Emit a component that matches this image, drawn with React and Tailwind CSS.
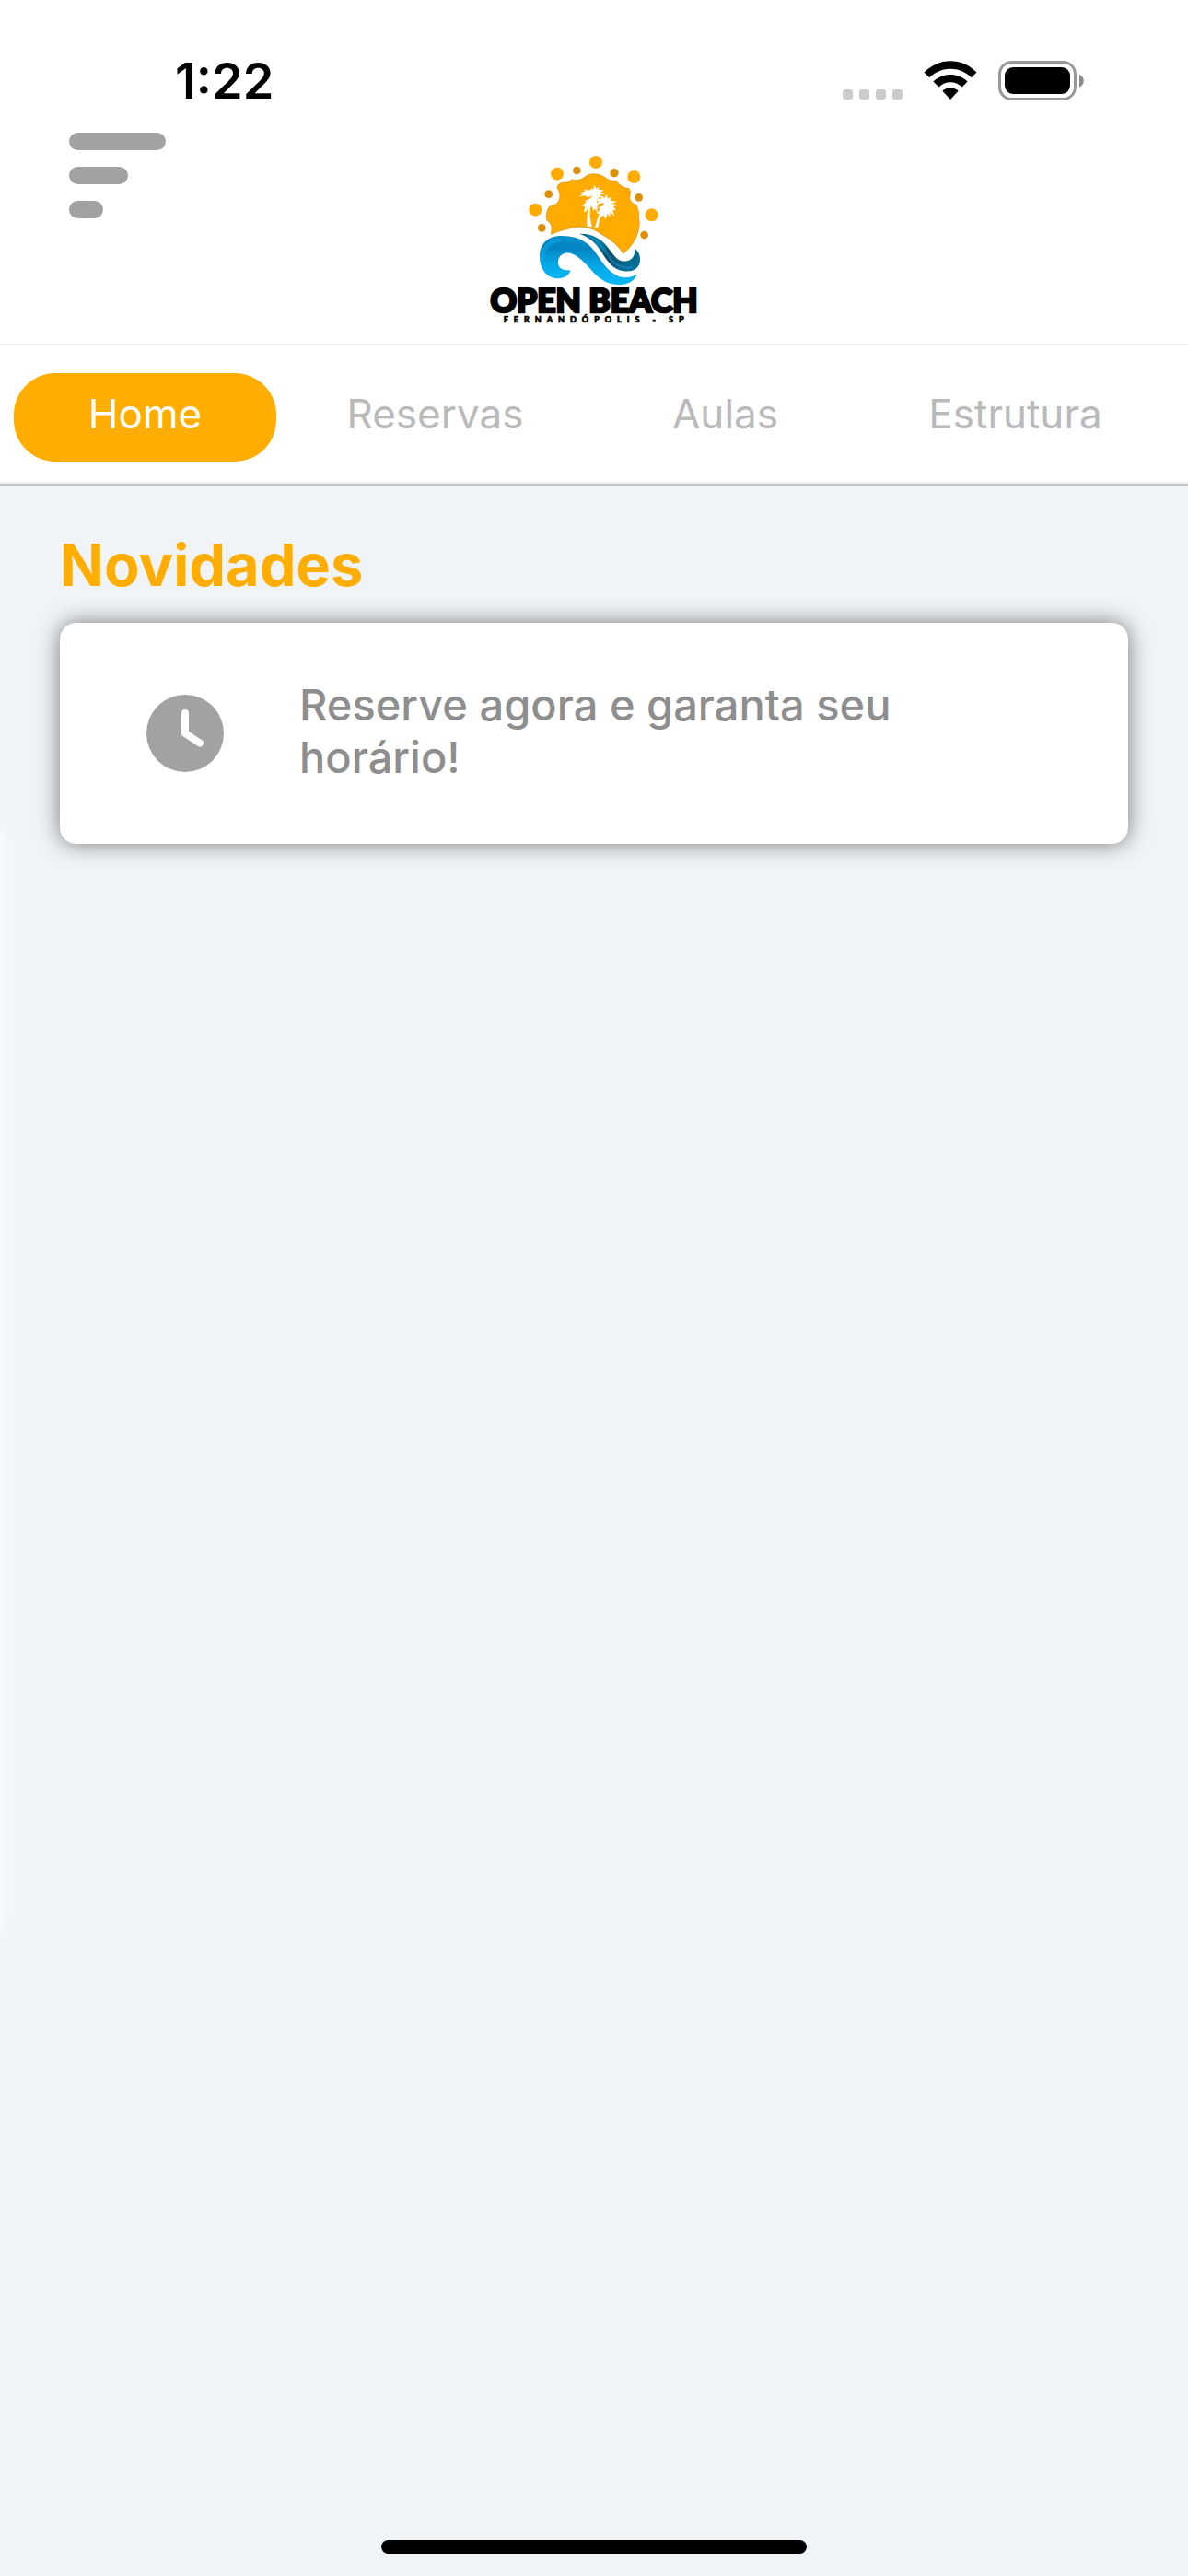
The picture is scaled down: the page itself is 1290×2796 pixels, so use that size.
import React from "react";

const tabs = ["Home", "Reservas", "Aulas", "Estrutura"];

function StatusBar() {
  return (
    <div className="flex items-center justify-between pl-[190px] pr-[113px] pt-[56px]">
      <time className="text-[54px] font-semibold leading-[64px] text-black">1:22</time>
      <div className="flex items-end gap-[23px] pb-[2px]">
        <div className="flex gap-[7px] pb-px" aria-label="Sem sinal">
          {[0, 1, 2, 3].map((i) => (
            <span key={i} className="size-[11px] rounded-[3px] bg-[#cbcbcb]" />
          ))}
        </div>
        <svg className="h-[43px] w-[58px]" viewBox="0 0 58 43" aria-label="Wi-Fi">
          <path d="M0.5 12.6 C16 -3.8 42 -3.8 57.5 12.6 L51.8 18.2 C39 5.6 19 5.6 6.2 18.2 Z" />
          <path d="M10.4 22.4 C20.6 12.4 37.4 12.4 47.6 22.4 L41.6 28.4 C34.5 21.4 23.5 21.4 16.4 28.4 Z" />
          <path d="M20.4 32.8 C25 28 33 28 37.6 32.8 L29 42 Z" />
        </svg>
        <svg className="h-[43px] w-[93px]" viewBox="0 0 93 43" aria-label="Bateria">
          <rect x="1.5" y="1.5" width="82" height="40" rx="13" fill="none" stroke="#999" strokeWidth="3" />
          <rect x="7" y="7" width="71" height="29" rx="9" />
          <path d="M88 15 C94.300 17 94.300 26.500 88 28.500 Z" fill="#8a8a8a" />
        </svg>
      </div>
    </div>
  );
}

function Logo() {
  return (
    <svg className="h-[200px] w-[250px]" viewBox="0 0 750 600" role="img" aria-label="Open Beach Fernandópolis - SP">
      <defs>
        <linearGradient id="wave" x1="0.3" y1="0" x2="0.2" y2="1">
          <stop offset="0" stopColor="#058fd0" />
          <stop offset="0.25" stopColor="#0584c2" />
          <stop offset="0.6" stopColor="#06a8e8" />
          <stop offset="1" stopColor="#08bdfa" />
        </linearGradient>
        <linearGradient id="crest" x1="0" y1="0" x2="1" y2="0.5">
          <stop offset="0" stopColor="#045d84" />
          <stop offset="0.35" stopColor="#0581ae" />
          <stop offset="0.6" stopColor="#034d6c" />
          <stop offset="1" stopColor="#056d96" />
        </linearGradient>
      </defs>
      <path
        d="M235 283 L237 268 Q239 247 221 237 Q217 220 224 202 Q230 188 244 188 Q265 180 264 156 Q262 140 255 133 Q254 121 270 115 Q293 116 303 104 Q325 112 344 97 Q353 87 374 86 Q396 87 410 97 Q424 111 447 109 Q461 130 489 134 Q496 141 491 161 Q491 180 513 187 L521 212 Q519 228 523 245 Q522 264 519 274 Q508 314 471 346 C450 316 430 301 405 286 C375 264 342 252 303 262 C275 269 255 274 235 283 Z"
        fill="#ffab00"
        stroke="#d48b08"
        strokeWidth="2"
      />
      <g fill="#ffab00">
        <circle cx="381" cy="48" r="21" />
        <circle cx="255" cy="86" r="21" />
        <circle cx="505" cy="96" r="21" />
        <circle cx="184" cy="203" r="21" />
        <circle cx="563" cy="220" r="21" />
      </g>
      <g fill="#db9008">
        <circle cx="319" cy="75" r="13" />
        <circle cx="441" cy="83" r="14" />
        <circle cx="227" cy="152" r="13" />
        <circle cx="521" cy="163" r="13" />
        <circle cx="205" cy="262" r="13" />
        <circle cx="539" cy="285" r="13" />
      </g>
      <g fill="#fff">
        <path d="M371 157 L356 162 L344 157 L327 159 L339 151 L330 148 L347 143 L340 136 L361 140 L367 133 L372 139 L376 122 L383 135 L390 129 L391 139 L407 137 L397 146 L410 152 L394 154 L404 165 L390 161 L397 178 L384 169 L385 185 L386 213 L378 199 L374 207 L366 188 L362 204 L355 197 L351 207 L341 211 L346 193 L337 192 L350 176 L344 174 L360 168 Z" />
        <path d="M407 180 L391 183 L381 201 L382 187 L390 176 L383 171 L397 168 L402 158 L409 165 L416 152 L420 166 L433 162 L428 173 L450 176 L434 182 L451 190 L437 191 L447 205 L436 204 L441 223 L427 210 L428 227 L418 216 L414 234 L406 221 L399 226 L389 235 L393 216 L384 215 L395 201 L389 196 L404 190 Z" />
        <path d="M369 174 C359 204 360 229 369 258 L353 258 C350 225 354 198 365 173 Z" />
        <path d="M409 194 C401 214 393 230 388 262 L379 262 C383 235 393 216 405 193 Z" />
      </g>
      <path
        d="M298 400 C295 419 274 430 247 426 C214 420 197 388 198 352 C199 312 228 287 270 288 C326 287 362 312 386 351 C410 386 433 420 475 424 C491 424 505 418 515 413 C506 437 483 447 454 447 C412 445 389 425 363 396 C335 365 309 339 282 344 C261 348 252 371 262 389 C270 400 285 401 298 400 Z"
        fill="url(#wave)"
      />
      <path
        d="M206 365 C208 325 231 303 266 302"
        fill="none"
        stroke="#05afe9"
        strokeWidth="12"
        opacity="0.5"
      />
      <path
        d="M327 281 C368 280 402 298 425 332 C445 360 460 376 485 369 C501 364 509 350 508 331 C520 337 528 355 524 376 C518 398 498 406 473 403 C438 399 419 372 398 339 C381 311 358 292 327 281 Z"
        fill="url(#crest)"
      />
      <path
        d="M355 287 C392 303 409 335 431 366 C447 386 466 396 500 391"
        fill="none"
        stroke="#1591ba"
        strokeWidth="5"
        opacity="0.7"
      />
      <text x="375" y="538" textAnchor="middle" className="fill-black stroke-black stroke-[8px] font-[Lato] text-[106px] font-black">
        OPEN BEACH
      </text>
      <text x="80" y="571" className="fill-black stroke-black stroke-2 font-[Lato] text-[27px] font-black tracking-[18px]">
        FERNANDÓPOLIS - SP
      </text>
    </svg>
  );
}

export default function App() {
  return (
    <div className="relative flex min-h-screen flex-col overflow-hidden bg-[#f0f4f7] font-[Inter,sans-serif]">
      <header className="bg-white">
        <StatusBar />
        <div className="grid grid-cols-[1fr_auto_1fr] items-start border-b-2 border-[#ededed] pb-[13px] pt-px">
          <button type="button" aria-label="Abrir menu" className="ml-[75px] mt-[23px] flex w-[105px] flex-col gap-[18px]">
            <span className="h-[19px] w-full rounded-full bg-[#a2a2a2]" />
            <span className="h-[19px] w-[64px] rounded-full bg-[#a2a2a2]" />
            <span className="h-[19px] w-[37px] rounded-full bg-[#a2a2a2]" />
          </button>
          <div className="pt-[39px]">
            <Logo />
          </div>
        </div>
      </header>

      <nav className="grid grid-cols-4 gap-[30px] border-b-2 border-[#ededed] bg-white pb-[22px] pl-[15px] pr-[45px] pt-[30px] shadow-[0_2px_1px_rgba(0,0,0,0.2)]">
        {tabs.map((tab, i) => (
          <button
            key={tab}
            type="button"
            aria-current={i === 0 ? "page" : undefined}
            className={
              i === 0
                ? "h-[96px] rounded-[45px] bg-[#ffad00] pb-[8px] text-[44px] text-white"
                : "h-[96px] rounded-[45px] pb-[8px] text-[44px] text-[#bababa]"
            }
          >
            {tab}
          </button>
        ))}
      </nav>

      <main className="flex-1 px-[65px] pt-[48px]">
        <h1 className="text-[63px] font-bold leading-[80px] text-[#ffad00]">Novidades</h1>
        <a
          href="#reservas"
          className="mt-[23px] flex h-[240px] items-center rounded-[18px] bg-white pl-[94px] pr-[200px] shadow-[0_0_24px_rgba(0,0,0,0.5)]"
        >
          <svg className="size-[84px] shrink-0" viewBox="0 0 84 84" aria-hidden="true">
            <circle cx="42" cy="42" r="42" fill="#a2a2a2" />
            <path d="M42 20 V42 L58 52.500" fill="none" stroke="#fff" strokeWidth="8" strokeLinecap="round" strokeLinejoin="round" />
          </svg>
          <p className="ml-[82px] pb-[6px] text-[47px] font-medium leading-[57px] text-[#8e8e8e]">
            Reserve agora e garanta seu horário!
          </p>
        </a>
      </main>

      <footer className="flex justify-center pb-[24px]">
        <div className="h-[15px] w-[462px] rounded-full bg-black" />
      </footer>

      <div className="absolute -left-[12px] top-[900px] h-[1196px] w-[12px] shadow-[0_0_20px_3px_rgba(255,255,255,0.9)]" />
    </div>
  );
}
